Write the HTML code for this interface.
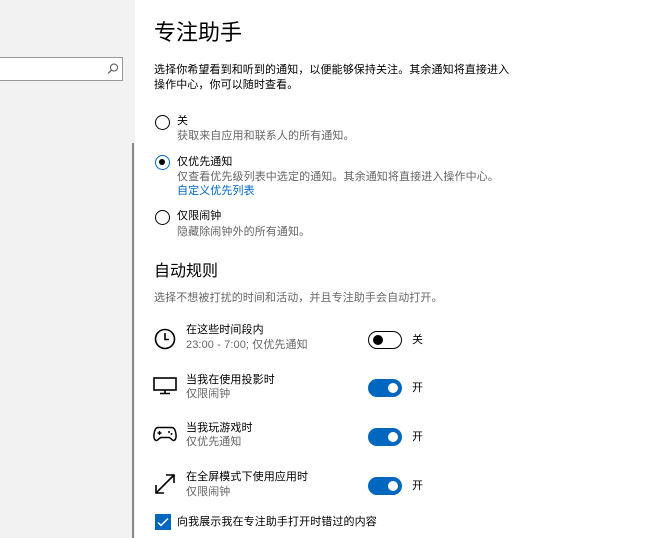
<!DOCTYPE html>
<html><head><meta charset="utf-8"><style>
*{margin:0;padding:0;box-sizing:border-box}
body{width:652px;height:538px;overflow:hidden;background:#fff;font-family:"Liberation Sans","Noto Sans CJK SC",sans-serif;color:#000;position:relative}
.a{position:absolute;white-space:nowrap}
.left{position:absolute;left:0;top:0;width:135px;height:538px;background:#f2f2f2}
.t{font-size:11px;line-height:15px;letter-spacing:0.1px}
.g{color:#666}
.radio{position:absolute;width:15px;height:15px;border:1.5px solid #000;border-radius:50%}
.tog{position:absolute;left:368px;width:34px;height:18px;border-radius:9px;background:#0067c0}
.tog::after{content:"";position:absolute;right:4px;top:4px;width:10px;height:10px;border-radius:50%;background:#fff}
.off{background:#fff;border:1.5px solid #000}
.off::after{left:4px;top:3px;right:auto;background:#000}
</style></head><body>
<div class="left"></div>
<div class="a" style="left:-2px;top:57px;width:125px;height:24px;border:1.5px solid #999;background:#fff"></div>
<svg class="a" style="left:106px;top:62px" width="14" height="14" viewBox="0 0 14 14"><circle cx="8" cy="5.5" r="3.5" fill="none" stroke="#555" stroke-width="1"/><path d="M5.5 8L2 11.5" stroke="#555" stroke-width="1.2"/></svg>
<div class="a" style="left:132px;top:143px;width:2px;height:395px;background:#888"></div>

<div class="a" style="left:154px;top:18px;font-size:22px;line-height:30px">专注助手</div>
<div class="a t" style="left:154px;top:63px">选择你希望看到和听到的通知，以便能够保持关注。其余通知将直接进入</div>
<div class="a t" style="left:154px;top:78px">操作中心，你可以随时查看。</div>

<div class="radio" style="left:155px;top:115px"></div>
<div class="a t" style="left:177px;top:114px">关</div>
<div class="a t g" style="left:177px;top:129px">获取来自应用和联系人的所有通知。</div>

<div class="radio" style="left:155px;top:155px;border-color:#0067c0"><div style="position:absolute;left:3px;top:3px;width:6px;height:6px;border-radius:50%;background:#000"></div></div>
<div class="a t" style="left:177px;top:155px">仅优先通知</div>
<div class="a t g" style="left:177px;top:170px">仅查看优先级列表中选定的通知。其余通知将直接进入操作中心。</div>
<div class="a t" style="left:177px;top:184px;color:#0067c0">自定义优先列表</div>

<div class="radio" style="left:155px;top:210px"></div>
<div class="a t" style="left:177px;top:209px">仅限闹钟</div>
<div class="a t g" style="left:177px;top:225px">隐藏除闹钟外的所有通知。</div>

<div class="a" style="left:154px;top:261px;font-size:16px;line-height:22px">自动规则</div>
<div class="a t g" style="left:154px;top:291px">选择不想被打扰的时间和活动，并且专注助手会自动打开。</div>

<svg class="a" style="left:154px;top:328px" width="22" height="22" viewBox="0 0 22 22"><circle cx="11" cy="11" r="9.5" fill="none" stroke="#000" stroke-width="1.6"/><path d="M11 5v6.5h4" fill="none" stroke="#000" stroke-width="1.6"/></svg>
<div class="a t" style="left:186px;top:323px">在这些时间段内</div>
<div class="a t g" style="left:186px;top:338px">23:00 - 7:00; 仅优先通知</div>
<div class="tog off" style="top:331px"></div>
<div class="a t" style="left:412px;top:333px">关</div>

<svg class="a" style="left:153px;top:377px" width="24" height="18" viewBox="0 0 24 18"><rect x="1" y="1" width="22" height="12" fill="none" stroke="#000" stroke-width="1.6"/><path d="M12 13v3M7 16.5h10" stroke="#000" stroke-width="1.6"/></svg>
<div class="a t" style="left:186px;top:373px">当我在使用投影时</div>
<div class="a t g" style="left:186px;top:387px">仅限闹钟</div>
<div class="tog" style="top:379px"></div>
<div class="a t" style="left:412px;top:381px">开</div>

<svg class="a" style="left:153px;top:426px" width="24" height="16" viewBox="0 0 24 16"><path d="M5 1.5h14c2.5 0 3.5 3 4 7s-1 6-2.5 6-3-3-4.5-3h-8c-1.5 0-3 3-4.5 3S0.5 12.5 1 8.5s1.5-7 4-7z" fill="none" stroke="#000" stroke-width="1.5"/><path d="M4.5 7h4M6.5 5v4" stroke="#000" stroke-width="1.4"/><circle cx="16" cy="6" r="1" fill="#000"/><circle cx="18.5" cy="8" r="1" fill="#000"/></svg>
<div class="a t" style="left:186px;top:421px">当我玩游戏时</div>
<div class="a t g" style="left:186px;top:435px">仅优先通知</div>
<div class="tog" style="top:428px"></div>
<div class="a t" style="left:412px;top:430px">开</div>

<svg class="a" style="left:154px;top:473px" width="22" height="22" viewBox="0 0 22 22"><path d="M2 20L20 2M12 2h8v8M2 12v8h8" fill="none" stroke="#000" stroke-width="1.6"/></svg>
<div class="a t" style="left:186px;top:470px">在全屏模式下使用应用时</div>
<div class="a t g" style="left:186px;top:485px">仅限闹钟</div>
<div class="tog" style="top:477px"></div>
<div class="a t" style="left:412px;top:479px">开</div>

<div class="a" style="left:155px;top:514px;width:16px;height:16px;background:#0067c0"><svg width="16" height="16" viewBox="0 0 16 16"><path d="M3 8.5l3 3 7-7" fill="none" stroke="#fff" stroke-width="1.5"/></svg></div>
<div class="a t" style="left:177px;top:515px">向我展示我在专注助手打开时错过的内容</div>
</body></html>
